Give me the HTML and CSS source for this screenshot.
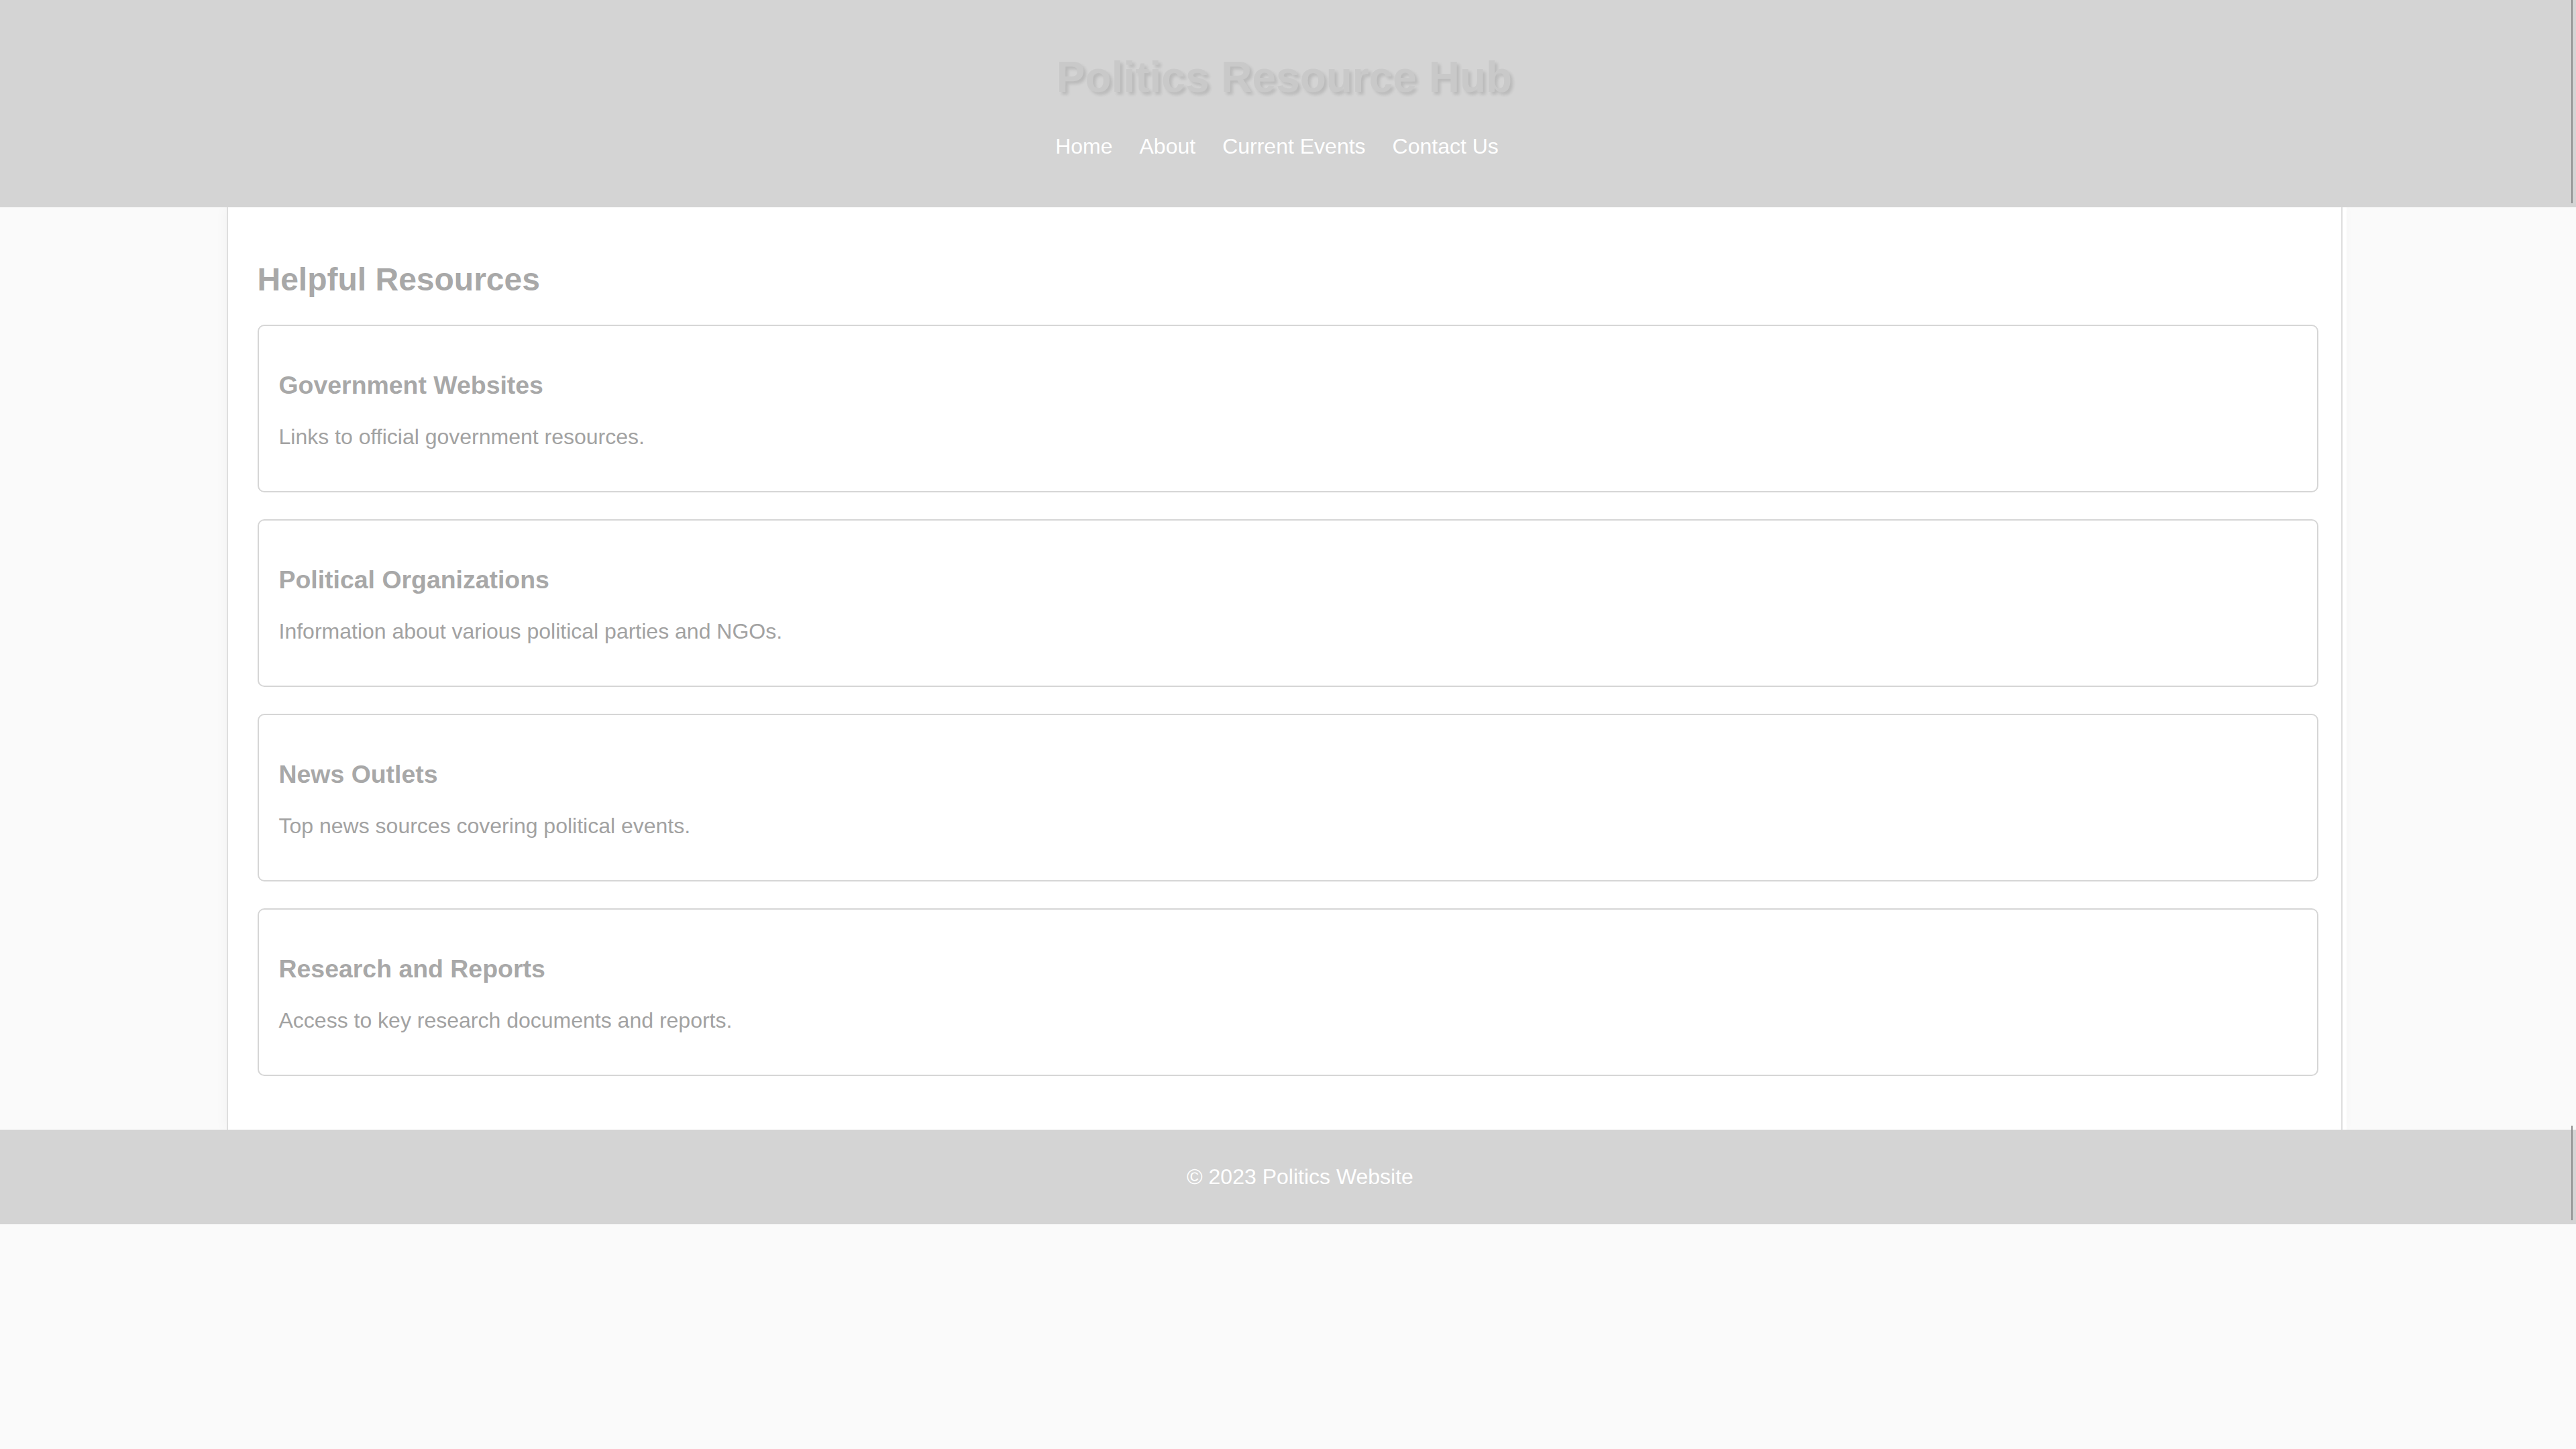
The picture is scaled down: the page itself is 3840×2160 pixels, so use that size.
FILE: index.html
```html
<!DOCTYPE html>
<html lang="en">
<head>
<meta charset="utf-8">
<title>Politics Resource Hub</title>
<link rel="stylesheet" href="styles.css">
</head>
<body>
<header class="site-header">
  <h1 class="site-title">Politics Resource Hub</h1>
  <nav class="site-nav">
    <ul class="nav-list">
      <li class="nav-item"><a class="nav-link" href="#">Home</a></li>
      <li class="nav-item"><a class="nav-link" href="#">About</a></li>
      <li class="nav-item"><a class="nav-link" href="#">Current Events</a></li>
      <li class="nav-item"><a class="nav-link" href="#">Contact Us</a></li>
    </ul>
  </nav>
</header>
<main class="content">
  <h2 class="section-title">Helpful Resources</h2>
  <div class="card">
    <h3 class="card-title">Government Websites</h3>
    <p class="card-text">Links to official government resources.</p>
  </div>
  <div class="card">
    <h3 class="card-title">Political Organizations</h3>
    <p class="card-text">Information about various political parties and NGOs.</p>
  </div>
  <div class="card">
    <h3 class="card-title">News Outlets</h3>
    <p class="card-text">Top news sources covering political events.</p>
  </div>
  <div class="card">
    <h3 class="card-title">Research and Reports</h3>
    <p class="card-text">Access to key research documents and reports.</p>
  </div>
</main>
<footer class="site-footer">
  <p class="footer-text">&copy; 2023 Politics Website</p>
</footer>
</body>
</html>
```
FILE: styles.css
```css
html, body {
  margin: 0;
  padding: 0;
}

body {
  background: #fafafa;
  font-family: "Liberation Sans", Arial, sans-serif;
  padding-right: 11px;
}

.site-header {
  position: relative;
  background: #d4d4d4;
  margin-right: -11px;
  padding: 40px 51px 40px 40px;
  text-align: center;
}

.site-header::after {
  content: "";
  position: absolute;
  top: 0;
  bottom: 6px;
  right: 5px;
  width: 2px;
  background: #8c8c8c;
}

.site-title {
  margin: 38px 0 48px;
  font-size: 64px;
  font-weight: bold;
  color: #c9c9c9;
  text-shadow: 4px 4px 4px rgba(0, 0, 0, 0.12);
}

.nav-list {
  display: flex;
  justify-content: center;
  list-style: none;
  margin: 32px 0;
  padding: 0 22px 0 0;
}

.nav-item {
  margin: 0 20px;
}

.nav-link {
  color: #ffffff;
  text-decoration: none;
  font-size: 32px;
}

.content {
  width: 80vw;
  margin: 0 auto;
  padding: 40px 34px 40px 44px;
  background: #ffffff;
  border-left: 2px solid #dedede;
  border-right: 2px solid #dedede;
  box-shadow: 6px 0 0 #ffffff, 0 0 20px rgba(0, 0, 0, 0.04);
}

.section-title {
  margin: 40px 0;
  font-size: 48px;
  color: #a8a8a8;
}

.card {
  background: #ffffff;
  border: 2px solid #d6d6d6;
  border-radius: 10px;
  padding: 30px;
  margin-bottom: 40px;
}

.card-title {
  margin: 37px 0;
  font-size: 37.44px;
  color: #a8a8a8;
}

.card-text {
  margin: 32px 0;
  font-size: 32px;
  color: #a2a2a2;
}

.site-footer {
  position: relative;
  background: #d4d4d4;
  margin-right: -11px;
  padding: 20px 31px 20px 67px;
  text-align: center;
}

.site-footer::after {
  content: "";
  position: absolute;
  top: -6px;
  bottom: 6px;
  right: 5px;
  width: 2px;
  background: #8c8c8c;
}

.footer-text {
  margin: 32px 0;
  font-size: 32px;
  color: #ffffff;
}
```
